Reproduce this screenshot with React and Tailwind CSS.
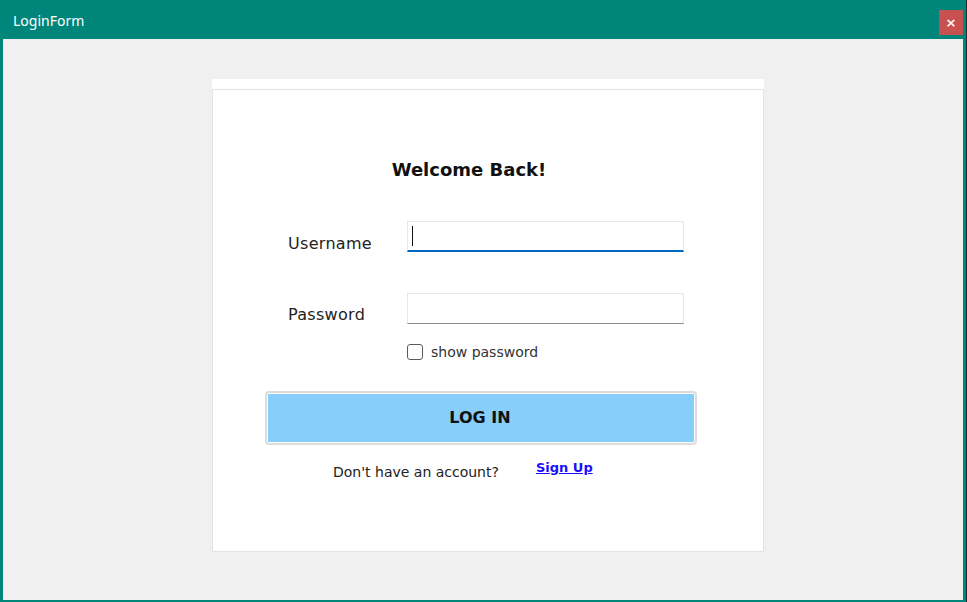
import React, { useState } from 'react';

const App = () => {
  const [show, setShow] = useState(false);

  return (
    <div className="w-[967px] h-[602px] bg-[#1d2a33] overflow-hidden" style={{ fontFamily: '"DejaVu Sans", Verdana, sans-serif' }}>
      <div className="w-[966px] h-[602px] bg-[#00857a] flex flex-col">
        {/* title bar */}
        <div className="h-[39px] flex items-start justify-between pl-[13px] pr-[3px]">
          <span className="mt-[10px] text-[14px] text-white" style={{ fontFamily: '"Noto Sans", "Open Sans", sans-serif' }}>
            LoginForm
          </span>
          <button className="mt-[10px] w-[24px] h-[25px] bg-[#c75050] text-white text-[13px] font-bold flex items-center justify-center leading-none">
            ×
          </button>
        </div>

        {/* body */}
        <div className="mx-[3px] mb-[2px] flex-1 bg-[#f0f0f0] pt-[40px]">
          <div className="ml-[209px] w-[552px] bg-white pt-[10px]">
            <div className="h-[463px] border border-[#e3e3e3] flex flex-col text-[#111]">
              <h1 className="mt-[68px] h-[24px] text-center text-[18px] font-bold leading-[24px] pr-[38px]">Welcome Back!</h1>

              <div className="mt-[39px] flex items-center h-[31px]">
                <label className="pl-[75px] w-[194px] text-[16px] text-[#222] pt-[14px] tracking-[0.3px]">Username</label>
                <div className="w-[277px] h-[31px] bg-white border border-[#e6e6e6] border-b-2 border-b-[#0067c0] flex items-center pl-[4px]">
                  <span className="w-[1px] h-[20px] bg-[#111]" />
                </div>
              </div>

              <div className="mt-[41px] flex items-center h-[31px]">
                <label className="pl-[75px] w-[194px] text-[16px] text-[#222] pt-[12px] tracking-[0.3px]">Password</label>
                <input
                  type={show ? 'text' : 'password'}
                  className="w-[277px] h-[31px] bg-white border border-[#e6e6e6] border-b-[#8a8a8a] outline-none px-[4px]"
                />
              </div>

              <div className="mt-[20px] flex items-center h-[16px] pl-[194px]">
                <button
                  onClick={() => setShow(!show)}
                  className="w-[16px] h-[16px] rounded-[3px] border border-[#5c5c5c] bg-white"
                />
                <span className="ml-[8px] text-[14px] text-[#333]">show password</span>
              </div>

              <div className="mt-[31px] ml-[52px] w-[432px] h-[54px] border-2 border-[#dcdcdc] rounded-[4px] p-[1px] bg-white">
                <button className="w-full h-full bg-[#87cefa] text-[16px] font-bold text-[#111] pr-[2px]">
                  LOG IN
                </button>
              </div>

              <div className="mt-[13px] flex items-start pl-[120px]">
                <span className="mt-[4px] text-[14px] text-[#222]">Don't have an account?</span>
                <a href="#" className="ml-[37px] text-[13px] font-bold text-[#1a0dff] underline">Sign Up</a>
              </div>
            </div>
          </div>
        </div>
      </div>
    </div>
  );
};

export default App;
